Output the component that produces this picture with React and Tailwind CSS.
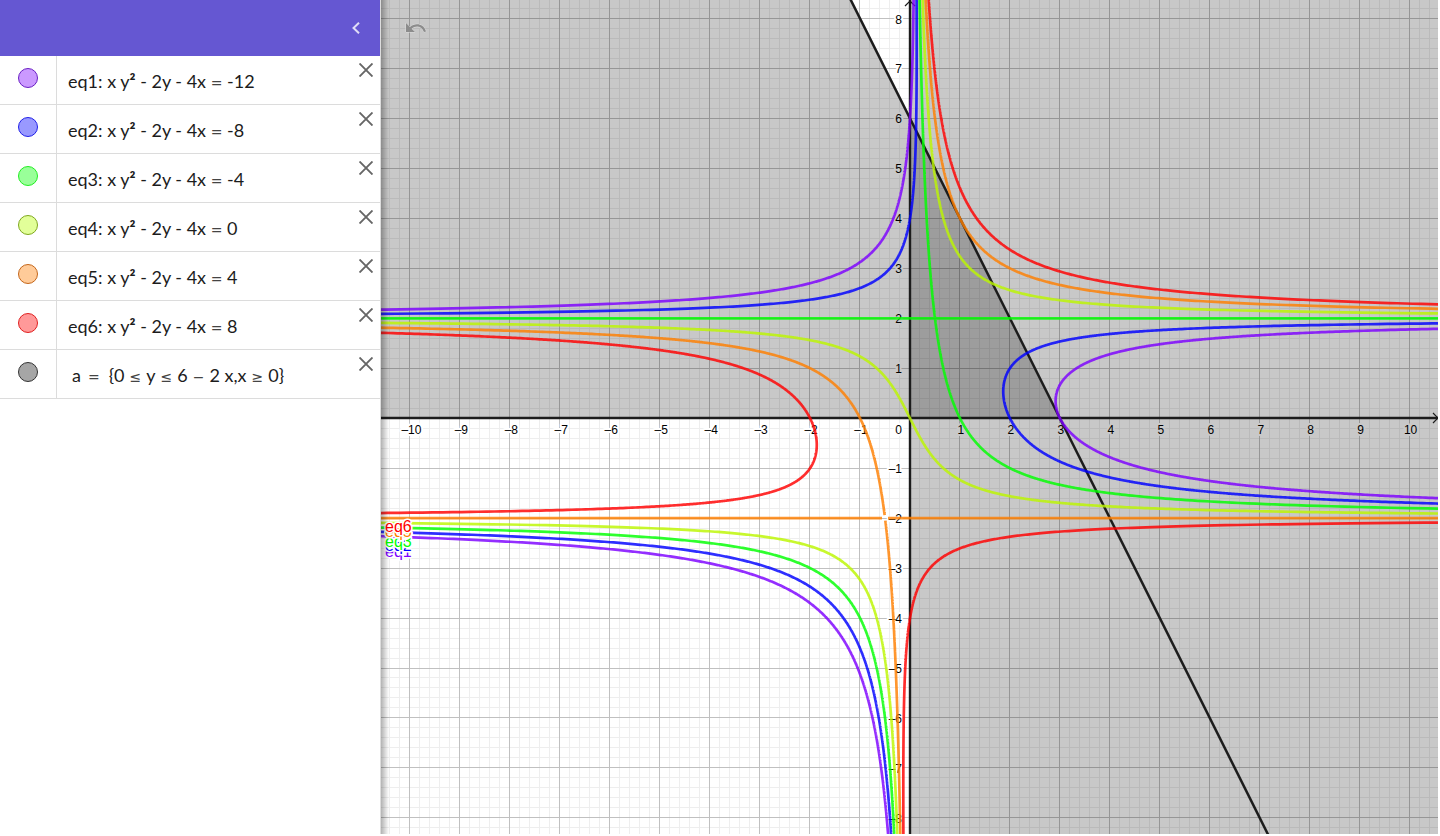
// graph space: one unit is UNIT pixels, the origin sits at (OX, OY)
const UNIT = 49.96;
const OX = 910;
const OY = 418.2;
const LEFT = 381;
const RIGHT = 1438;
const BOTTOM = 834;

const px = (x) => OX + x * UNIT;
const py = (y) => OY - y * UNIT;
const snap = (v) => Math.floor(v) + 0.5;

const equations = [
  { id: "eq1", c: -12, rhs: "-12", color: "#7d00ff", dot: "border-[#6a1fc4] bg-[#cb99ff]", labelY: 557 },
  { id: "eq2", c: -8, rhs: "-8", color: "#0000ff", dot: "border-[#2020e8] bg-[#9999ff]", labelY: 551 },
  { id: "eq3", c: -4, rhs: "-4", color: "#00ff00", dot: "border-[#22ee22] bg-[#99ff99]", labelY: 547 },
  { id: "eq4", c: 0, rhs: "0", color: "#bcf600", dot: "border-[#7fa81e] bg-[#e2ff99]", labelY: 537 },
  { id: "eq5", c: 4, rhs: "4", color: "#ff7f00", dot: "border-[#c4661a] bg-[#ffcb99]", labelY: 537 },
  { id: "eq6", c: 8, rhs: "8", color: "#ff0000", dot: "border-[#e02020] bg-[#ff9999]", labelY: 532 },
];

// x (y² - 4) = 2y + c, traced over y so that each branch is one polyline
function trace(c, from, to) {
  const points = [];
  const steps = 1500;
  for (let i = 0; i <= steps; i++) {
    const y = from + ((to - from) * i) / steps;
    let x;
    if (c === -4) x = 2 / (y + 2);
    else if (c === 4) x = 2 / (y - 2);
    else x = (2 * y + c) / (y * y - 4);
    if (Number.isFinite(x) && Math.abs(x) < 12) points.push(`${px(x).toFixed(2)} ${py(y).toFixed(2)}`);
  }
  return points.length ? `M${points.join("L")}` : "";
}

function curvePath(c) {
  if (c === -4) return `${trace(c, -9, -2.01)}${trace(c, -1.99, 9)}M${LEFT} ${py(2)}H${RIGHT}`;
  if (c === 4) {
    return `${trace(c, -9, -2.05)}${trace(c, -1.94, 1.99)}${trace(c, 2.01, 9)}M${LEFT} ${py(-2)}H882M888 ${py(-2)}H${RIGHT}`;
  }
  return `${trace(c, -9, -2.002)}${trace(c, -1.998, 1.998)}${trace(c, 2.002, 9)}`;
}

function gridPath(step, skip) {
  let d = "";
  for (let i = -60; i <= 60; i++) {
    if (skip && i % skip === 0) continue;
    const x = snap(px(i * step) - 0.5);
    const y = snap(py(i * step));
    if (x > LEFT && x < RIGHT) d += `M${x} 0V${BOTTOM}`;
    if (y > 0 && y < BOTTOM) d += `M${LEFT} ${y}H${RIGHT}`;
  }
  return d;
}

const ticks = (from, to) => Array.from({ length: to - from + 1 }, (_, i) => from + i).filter((n) => n !== 0);
const tickLabel = (n) => (n < 0 ? `–${-n}` : `${n}`);

function GraphView() {
  return (
    <svg
      viewBox="381 0 1057 834"
      preserveAspectRatio="xMinYMin slice"
      fontFamily="'Liberation Sans', Arial, sans-serif"
      className="block h-full w-full"
      role="img"
      aria-label="Graphics view"
    >
      <defs>
        <linearGradient id="edge" x1="0" x2="1" y1="0" y2="0">
          <stop offset="0" stopColor="#000" stopOpacity="0.3" />
          <stop offset="1" stopColor="#000" stopOpacity="0" />
        </linearGradient>
      </defs>
      <path d={gridPath(0.2, 5)} stroke="#eeeeee" fill="none" />
      <path d={gridPath(1)} stroke="#c0c0c0" fill="none" />

      <g fontSize="12" fill="#000" stroke="#fff" strokeWidth="4" strokeLinejoin="round" className="[paint-order:stroke]">
        {ticks(-10, 10).map((n) => (
          <text key={n} x={px(n) + 1} y="434" textAnchor="middle">{tickLabel(n)}</text>
        ))}
        {ticks(-8, 8).map((n) => (
          <text key={n} x="902" y={py(n) + 5} textAnchor="end">{tickLabel(n)}</text>
        ))}
        <text x="902" y="434" textAnchor="end">0</text>
      </g>

      <path d={`M${LEFT} 0H${px(-1.18)}L${px(3)} ${OY}H${LEFT}Z`} fill="#000" fillOpacity="0.216" />
      <path d={`M${OX} 0H${RIGHT}V${BOTTOM}H${OX}Z`} fill="#000" fillOpacity="0.216" />

      <g stroke="#1c1c1c" fill="none">
        <path d={`M${LEFT} 418H${RIGHT}M910 0V${BOTTOM}`} strokeWidth="2.4" />
        <path d="M1433 413L1438 418L1433 423M905 6L910 1L915 6" strokeWidth="1.2" />
        <path d={`M${px(-1.5)} ${py(9)}L${px(7.5)} ${py(-9)}`} strokeWidth="2.5" />
      </g>

      {equations.map((eq) => (
        <path key={eq.id} d={curvePath(eq.c)} stroke={eq.color} strokeOpacity="0.82" strokeWidth="2.7" fill="none" />
      ))}

      <g fontSize="16" stroke="#fff" strokeWidth="3" strokeLinejoin="round" className="[paint-order:stroke]">
        {equations.map((eq) => (
          <text key={eq.id} x="385" y={eq.labelY} fill={eq.color}>{eq.id}</text>
        ))}
      </g>
      <rect x={LEFT} y="0" width="8" height={BOTTOM} fill="url(#edge)" />
    </svg>
  );
}

function Op({ children }) {
  return <span className="font-['DejaVu_Sans',sans-serif] text-[14px] text-[#444]">{children}</span>;
}

function Row({ name, dot, children }) {
  return (
    <li className="flex h-[49px] border-b border-[#dcdcdc]">
      <div className="flex w-[57px] shrink-0 items-start justify-center border-r border-[#dcdcdc] pt-3">
        <button type="button" aria-label={`Show or hide ${name}`} className={`size-5 rounded-full border ${dot}`} />
      </div>
      <div className="flex min-w-0 flex-1 items-center pt-0.5 pl-[11px] font-[Lato,sans-serif] text-[18px] whitespace-pre text-[#1c1c1c]">
        {children}
      </div>
      <button type="button" aria-label={`Delete ${name}`} className="mt-[7px] mr-[7px] size-[14px] shrink-0">
        <svg viewBox="0 0 14 14" className="size-[14px]" stroke="#666" strokeWidth="1.9" fill="none">
          <path d="M0.5 0.5L13.5 13.5M13.5 0.5L0.5 13.5" />
        </svg>
      </button>
    </li>
  );
}

export default function App() {
  return (
    <div className="flex h-screen overflow-hidden bg-white pr-0.5 pb-0.5">
      <aside className="flex w-[381px] shrink-0 flex-col border-r border-[#dcdcdc] bg-white">
        <header className="flex h-14 shrink-0 items-center justify-end bg-[#6557d2] pr-5">
          <button type="button" aria-label="Collapse algebra view" className="h-3 w-2">
            <svg viewBox="0 0 8 12" className="h-3 w-2" stroke="#e0ddf6" strokeWidth="2" fill="none">
              <path d="M7 0.7L1.5 6L7 11.3" />
            </svg>
          </button>
        </header>
        <ul>
          {equations.map((eq) => (
            <Row key={eq.id} name={eq.id} dot={eq.dot}>
              <span>
                {eq.id}: x y<b>²</b> - 2y - 4x <Op>=</Op> {eq.rhs}
              </span>
            </Row>
          ))}
          <Row name="a" dot="border-[#333333] bg-[#a6a6a6]">
            <div className="flex items-baseline gap-[5px] pl-1">
              <span className="pr-0.5">a</span>
              <Op>=</Op>
              <span className="pl-1">{"{0"}</span>
              <Op>≤</Op>
              <span>y</span>
              <Op>≤</Op>
              <span>6</span>
              <Op>−</Op>
              <span>2 x,x</span>
              <Op>≥</Op>
              <span>{"0}"}</span>
            </div>
          </Row>
        </ul>
      </aside>
      <main className="relative min-w-0 flex-1">
        <GraphView />
        <button type="button" aria-label="Undo" className="absolute top-[22px] left-[24px] h-3 w-[22px]">
          <svg viewBox="0 0 22 12" className="h-3 w-[22px]">
            <path
              d="M1 1V10H10L6.6 6.8C11 3 16.5 4 19 10L21 9.4C18.5 1 10 0.5 5 5Z"
              fill="#8c8c8c"
              stroke="#dedede"
              strokeWidth="1"
              className="[paint-order:stroke]"
            />
          </svg>
        </button>
      </main>
    </div>
  );
}
